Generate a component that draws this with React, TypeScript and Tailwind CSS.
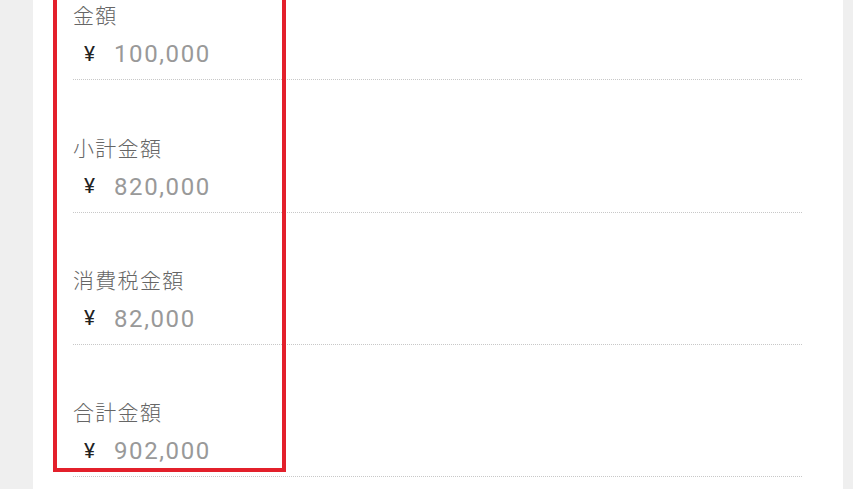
import React from "react";

const rows = [
  { label: "金額", value: "100,000" },
  { label: "小計金額", value: "820,000" },
  { label: "消費税金額", value: "82,000" },
  { label: "合計金額", value: "902,000" },
];

export default function App() {
  return (
    <div className="w-[853px] h-[489px] overflow-hidden bg-[#efefef] relative">
      <div className="ml-[33px] w-[810px] h-full bg-white pl-[40px] pr-[41px] overflow-hidden">
        <div className="mt-[-52px]">
          {rows.map((r) => (
            <div
              key={r.label}
              className="h-[132.33px] border-b border-dotted border-[#c8c8c8] flex flex-col justify-end pb-[6px]"
            >
              <div
                className="text-[21px] leading-[28px] tracking-[1.3px] text-[#666] font-light"
                style={{ fontFamily: '"Noto Sans CJK JP", "Noto Sans", sans-serif' }}
              >
                {r.label}
              </div>
              <div className="flex items-center h-[38px] mt-[7px]">
                <span
                  className="ml-[11px] w-[30px] text-[21px] text-[#222]"
                  style={{ fontFamily: 'Roboto, "Noto Sans", sans-serif' }}
                >
                  ¥
                </span>
                <span
                  className="text-[24px] tracking-[1.6px] text-[#999]"
                  style={{ fontFamily: 'Roboto, "Noto Sans", sans-serif' }}
                >
                  {r.value}
                </span>
              </div>
            </div>
          ))}
        </div>
      </div>
      <div className="absolute left-[53px] top-[-10px] w-[233px] h-[482px] border-[4px] border-[#e3202b]" />
    </div>
  );
}
